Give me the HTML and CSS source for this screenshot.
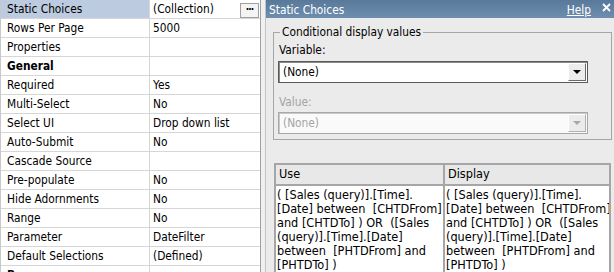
FILE: index.html
```html
<!DOCTYPE html>
<html>
	<head>
		<meta charset="UTF-8">
		<title>Static Choices</title>
		<link rel="stylesheet" href="styles.css">
	</head>
	<body>
		<div id="page">
			<div id="props">
				<div class="row"><div class="name sel">Static Choices</div><div class="value">(Collection)<span class="more">&middot;&middot;&middot;</span></div></div>
				<div class="row"><div class="name">Rows Per Page</div><div class="value">5000</div></div>
				<div class="row"><div class="name">Properties</div><div class="value"></div></div>
				<div class="row"><div class="name group">General</div><div class="value"></div></div>
				<div class="row"><div class="name">Required</div><div class="value">Yes</div></div>
				<div class="row"><div class="name">Multi-Select</div><div class="value">No</div></div>
				<div class="row"><div class="name">Select UI</div><div class="value">Drop down list</div></div>
				<div class="row"><div class="name">Auto-Submit</div><div class="value">No</div></div>
				<div class="row"><div class="name">Cascade Source</div><div class="value"></div></div>
				<div class="row"><div class="name">Pre-populate</div><div class="value">No</div></div>
				<div class="row"><div class="name">Hide Adornments</div><div class="value">No</div></div>
				<div class="row"><div class="name">Range</div><div class="value">No</div></div>
				<div class="row"><div class="name">Parameter</div><div class="value">DateFilter</div></div>
				<div class="row"><div class="name">Default Selections</div><div class="value">(Defined)</div></div>
				<div class="row"><div class="name group">Box</div><div class="value"></div></div>
			</div>

			<div id="splitter"></div>

			<div id="dialog">
				<div class="titlebar">
					<span class="title">Static Choices</span>
					<a href="#" class="help">Help</a>
					<span class="close"><svg width="9" height="9" viewBox="0 0 9 9"><path d="M1 1L8 8M8 1L1 8" stroke="#fff" stroke-width="1.8"/></svg></span>
				</div>
				<div class="dbody">
					<fieldset>
						<legend>Conditional display values</legend>
						<div class="label">Variable:</div>
						<div class="combo"><span>(None)</span><span class="drop"><i></i></span></div>
						<div class="label off">Value:</div>
						<div class="combo off"><span>(None)</span><span class="drop"><i></i></span></div>
					</fieldset>

					<table class="choices">
						<colgroup><col class="c1"><col class="c2"></colgroup>
						<tr><th>Use</th><th>Display</th></tr>
						<tr>
							<td>( [Sales (query)].[Time].<br>[Date] between  [CHTDFrom]<br>and [CHTDTo] ) OR  ([Sales<br>(query)].[Time].[Date]<br>between  [PHTDFrom] and<br>[PHTDTo] )</td>
							<td>( [Sales (query)].[Time].<br>[Date] between  [CHTDFrom]<br>and [CHTDTo] ) OR  ([Sales<br>(query)].[Time].[Date]<br>between  [PHTDFrom] and<br>[PHTDTo] )</td>
						</tr>
					</table>
				</div>
			</div>
		</div>
	</body>
</html>
```

FILE: styles.css
```css
*{
	margin:0;
	padding:0;
	box-sizing:border-box;
}
body{
	font-family:"DejaVu Sans Condensed","DejaVu Sans",sans-serif;
	font-stretch:condensed;
	font-size:11.8px;
	color:#000;
	background:#f0f0f0;
	overflow:hidden;
}
div#page{
	display:flex;
	height:272px;
	overflow:hidden;
}

/* property grid */
div#props{
	width:261px;
	flex:none;
	background:#fff;
	border-left:1px solid #c8c8c8;
	border-right:1px solid #a0a0a0;
}
div#props div.row{
	display:flex;
	height:19px;
	border-bottom:1px solid #d6d6d6;
	line-height:18px;
}
div#props div.name{
	width:149px;
	padding-left:6px;
	border-right:1px solid #d6d6d6;
	white-space:nowrap;
}
div#props div.name.sel{
	background:#bccbdf;
}
div#props div.name.group{
	font-weight:bold;
}
div#props div.value{
	flex:1;
	padding-left:3px;
	position:relative;
	white-space:nowrap;
}
div#props span.more{
	position:absolute;
	right:1px;
	top:3px;
	width:19px;
	height:15px;
	border:1px solid #a0a0a0;
	background:#f4f4f4;
	font-size:10px;
	font-weight:bold;
	line-height:11px;
	text-align:center;
	letter-spacing:-1px;
}

div#splitter{
	width:5px;
	flex:none;
	background:#f0f0f0;
	border-right:1px solid #c4c4c4;
}

/* dialog */
div#dialog{
	flex:1;
	background:#ebebeb;
	display:flex;
	flex-direction:column;
}
div#dialog div.titlebar{
	height:18px;
	display:flex;
	align-items:center;
	padding:0 3px 0 3px;
	background:linear-gradient(#59799b,#6e8eaf);
	color:#fff;
	flex:none;
}
div#dialog span.title{
	flex:1;
	padding-top:1px;
}
div#dialog a.help{
	color:#fff;
	text-decoration:underline;
	margin-right:11px;
	padding-top:1px;
}
div#dialog span.close{
	display:flex;
	margin-top:-3px;
}
div#dialog div.dbody{
	padding:7px 2px 0 7px;
}
fieldset{
	border:1px solid #a6a6a6;
	padding:0 5px 5px 5px;
}
legend{
	margin-left:1px;
	padding:0 2px;
	line-height:14px;
}
div.label{
	line-height:14px;
	margin-top:4px;
}
div.label.off{
	color:#a3a3a3;
	margin-top:12px;
}
div.combo{
	display:flex;
	align-items:center;
	width:310px;
	height:22px;
	margin:4px 0 0 -1px;
	background:#fff;
	border:1px solid #5a5a5a;
	box-shadow:inset 1px 1px 0 #8a8a8a;
	padding:0 1px 0 4px;
}
div.combo span:first-child{
	flex:1;
}
div.combo span.drop{
	width:18px;
	height:18px;
	background:#ececec;
	border:1px solid;
	border-color:#fff #6a6a6a #6a6a6a #fff;
	display:flex;
	align-items:center;
	justify-content:center;
}
div.combo span.drop i{
	display:block;
	border-left:4px solid transparent;
	border-right:4px solid transparent;
	border-top:4px solid #000;
}
div.combo.off{
	margin-top:3px;
	height:22px;
	color:#a3a3a3;
	border-color:#a8a8a8;
	box-shadow:inset 1px 1px 0 #c8c8c8;
	background:#fafafa;
}
div.combo.off span.drop{
	border-color:#fff #b0b0b0 #b0b0b0 #fff;
}
div.combo.off span.drop i{
	border-top-color:#a8a8a8;
}

table.choices{
	margin:23px 0 0 1px;
	width:337px;
	table-layout:fixed;
	border-collapse:collapse;
	background:#fff;
	font-size:12.6px;
}
table.choices col.c1{
	width:169px;
}
table.choices th,
table.choices td{
	border:2px solid #a6a6a6;
	text-align:left;
	font-weight:normal;
	vertical-align:top;
	white-space:pre;
	overflow:hidden;
}
table.choices th{
	background:#e8e8e8;
	height:21px;
	padding:1px 3px 0 3px;
	line-height:16px;
}
table.choices td{
	padding:2px 0 4px 1px;
	line-height:14px;
	border-bottom:none;
}
```
